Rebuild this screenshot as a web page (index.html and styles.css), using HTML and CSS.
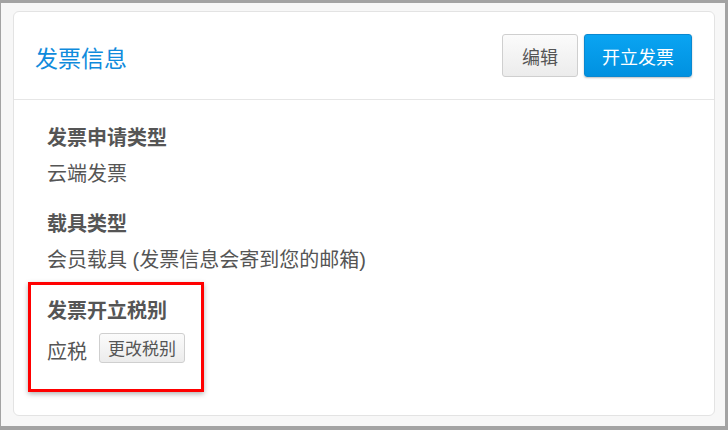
FILE: index.html
```html
<!DOCTYPE html>
<html lang="zh-CN">
<head>
    <meta charset="UTF-8">
    <meta name="viewport" content="width=device-width, initial-scale=1.0">
    <title>发票信息</title>
    <link rel="stylesheet" href="styles.css">
</head>
<body>
    <div class="frame">
        <div class="card">
            <div class="card-head">
                <h2 class="title">发票信息</h2>
                <div class="actions">
                    <button class="btn">编辑</button>
                    <button class="btn btn-blue">开立发票</button>
                </div>
            </div>
            <div class="card-body">
                <div class="group">
                    <div class="label">发票申请类型</div>
                    <div class="value">云端发票</div>
                </div>
                <div class="group">
                    <div class="label">载具类型</div>
                    <div class="value">会员载具 (发票信息会寄到您的邮箱)</div>
                </div>
                <div class="group marked">
                    <div class="label">发票开立税别</div>
                    <div class="value row">
                        <span>应税</span>
                        <button class="btn btn-small">更改税别</button>
                    </div>
                </div>
            </div>
        </div>
    </div>
</body>
</html>
```

FILE: styles.css
```css
html, body {
    margin: 0;
    height: 100%;
}
body {
    font-family: "Liberation Sans", "Noto Sans CJK SC", sans-serif;
    color: #555;
}
.frame {
    box-sizing: border-box;
    height: 430px;
    background: #f7f7f7;
    border: solid #a3a3a3;
    border-width: 3px 3px 4px 1px;
    padding: 8px 10px 0 12px;
}
.card {
    background: #fff;
    border: 1px solid #e3e3e3;
    border-radius: 6px;
    height: 405px;
    box-sizing: border-box;
}
.card-head {
    display: flex;
    align-items: center;
    justify-content: space-between;
    padding: 22px 22px 22px 21px;
    border-bottom: 1px solid #e6e6e6;
}
.title {
    margin: 3px 0 0 0;
    font-size: 23px;
    font-weight: 400;
    color: #0f8bdc;
}
.actions {
    display: flex;
    gap: 6px;
}
.btn {
    font-family: inherit;
    font-size: 18px;
    height: 43px;
    padding: 0 19px;
    border: 1px solid #cfcfcf;
    border-radius: 3px;
    background: linear-gradient(#fbfbfb, #ececec);
    color: #555;
    cursor: pointer;
}
.btn-blue {
    padding: 0 17px;
    border-color: #0a88d0;
    background: linear-gradient(#0aa4f2, #0091e0);
    color: #fff;
    box-shadow: 0 1px 2px rgba(0, 0, 0, .25);
}
.card-body {
    padding: 6px 14px 0;
}
.group {
    padding-left: 19px;
    margin-top: 14px;
    font-size: 20px;
    line-height: 36px;
}
.label {
    font-weight: 700;
}
.marked {
    width: fit-content;
    margin-top: 4px;
    padding: 8px 16px 19px 16px;
    border: 3px solid #f00;
    box-shadow: 0 2px 5px rgba(0, 0, 0, .3);
}
.row {
    display: flex;
    align-items: center;
    gap: 12px;
    margin-top: 5px;
}
.btn-small {
    font-size: 17px;
    height: 30px;
    padding: 0 8px;
    margin-top: -9px;
}
```
